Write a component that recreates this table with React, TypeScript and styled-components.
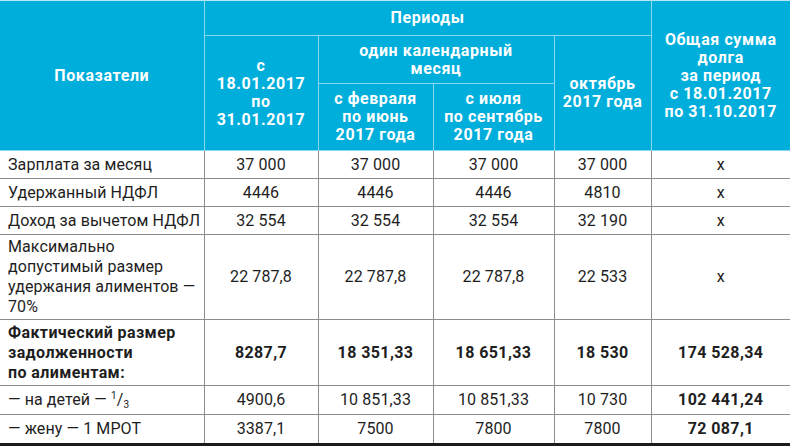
import React from 'react';
import styled, { createGlobalStyle } from 'styled-components';

const GlobalStyle = createGlobalStyle`
  html, body {
    margin: 0;
    padding: 0;
    background: #fff;
  }
  body {
    font-family: Roboto, "Noto Sans", sans-serif;
  }
`;

const Table = styled.table`
  width: 790px;
  table-layout: fixed;
  border-collapse: collapse;
  border-bottom: 3px solid #1b1b1b;
`;

const HeadRow = styled.tr<{ $h: number }>`
  height: ${(p) => p.$h}px;
`;

const HeadCell = styled.th`
  background: #00aedb;
  color: #fff;
  font-size: 16px;
  font-weight: 700;
  line-height: 18px;
  letter-spacing: 0.6px;
  text-align: center;
  vertical-align: middle;
  padding: 0 2px;
  border: 1px solid #8ad8ef;
  border-top-color: #b5e7f5;
  white-space: nowrap;

  &:first-child {
    border-left: none;
  }
  &:last-child {
    border-right: none;
  }
`;

const Row = styled.tr<{ $h: number }>`
  height: ${(p) => p.$h}px;
`;

const Cell = styled.td<{ $bold?: boolean; $label?: boolean }>`
  font-size: 16px;
  line-height: 20px;
  letter-spacing: ${(p) => (p.$bold ? '0.4px' : '0.1px')};
  color: #1e1e1e;
  font-weight: ${(p) => (p.$bold ? 700 : 400)};
  text-align: ${(p) => (p.$label ? 'left' : 'center')};
  vertical-align: middle;
  padding: ${(p) => (p.$label ? '0 0 0 8px' : '0 2px')};
  border: 1px solid #8c8c8c;
  border-top: none;
  white-space: nowrap;

  &:first-child {
    border-left: none;
  }
  &:last-child {
    border-right: none;
  }
`;

const Sup = styled.sup`
  font-size: 10px;
  line-height: 0;
  vertical-align: 6px;
`;

const Sub = styled.sub`
  font-size: 10px;
  line-height: 0;
  vertical-align: -3px;
`;

const cols = [204, 114, 115, 121, 97, 139];

type BodyRow = {
  label: React.ReactNode;
  values: string[];
  h: number;
  bold?: boolean;
  boldLast?: boolean;
};

const rows: BodyRow[] = [
  { label: 'Зарплата за месяц', values: ['37 000', '37 000', '37 000', '37 000', 'x'], h: 28 },
  { label: 'Удержанный НДФЛ', values: ['4446', '4446', '4446', '4810', 'x'], h: 28 },
  { label: 'Доход за вычетом НДФЛ', values: ['32 554', '32 554', '32 554', '32 190', 'x'], h: 28 },
  {
    label: (
      <>
        Максимально
        <br />
        допустимый размер
        <br />
        удержания алиментов —
        <br />
        70%
      </>
    ),
    values: ['22 787,8', '22 787,8', '22 787,8', '22 533', 'x'],
    h: 85,
  },
  {
    label: (
      <>
        Фактический размер
        <br />
        задолженности
        <br />
        по алиментам:
      </>
    ),
    values: ['8287,7', '18 351,33', '18 651,33', '18 530', '174 528,34'],
    h: 66,
    bold: true,
  },
  {
    label: (
      <>
        — на детей — <Sup>1</Sup>/<Sub>3</Sub>
      </>
    ),
    values: ['4900,6', '10 851,33', '10 851,33', '10 730', '102 441,24'],
    h: 29,
    boldLast: true,
  },
  { label: '— жену — 1 МРОТ', values: ['3387,1', '7500', '7800', '7800', '72 087,1'], h: 30, boldLast: true },
];

export default function App() {
  return (
    <>
      <GlobalStyle />
      <Table>
        <colgroup>
          {cols.map((w, i) => (
            <col key={i} style={{ width: w }} />
          ))}
        </colgroup>
        <thead>
          <HeadRow $h={35}>
            <HeadCell rowSpan={3}>Показатели</HeadCell>
            <HeadCell colSpan={4}>Периоды</HeadCell>
            <HeadCell rowSpan={3}>
              Общая сумма
              <br />
              долга
              <br />
              за период
              <br />с 18.01.2017
              <br />
              по 31.10.2017
            </HeadCell>
          </HeadRow>
          <HeadRow $h={48}>
            <HeadCell rowSpan={2}>
              с<br />
              18.01.2017
              <br />
              по
              <br />
              31.01.2017
            </HeadCell>
            <HeadCell colSpan={2}>
              один календарный
              <br />
              месяц
            </HeadCell>
            <HeadCell rowSpan={2}>
              октябрь
              <br />
              2017 года
            </HeadCell>
          </HeadRow>
          <HeadRow $h={67}>
            <HeadCell>
              с февраля
              <br />
              по июнь
              <br />
              2017 года
            </HeadCell>
            <HeadCell>
              с июля
              <br />
              по сентябрь
              <br />
              2017 года
            </HeadCell>
          </HeadRow>
        </thead>
        <tbody>
          {rows.map((r, i) => (
            <Row key={i} $h={r.h}>
              <Cell $label $bold={r.bold}>
                {r.label}
              </Cell>
              {r.values.map((v, j) => (
                <Cell key={j} $bold={r.bold || (r.boldLast && j === r.values.length - 1)}>
                  {v}
                </Cell>
              ))}
            </Row>
          ))}
        </tbody>
      </Table>
    </>
  );
}
